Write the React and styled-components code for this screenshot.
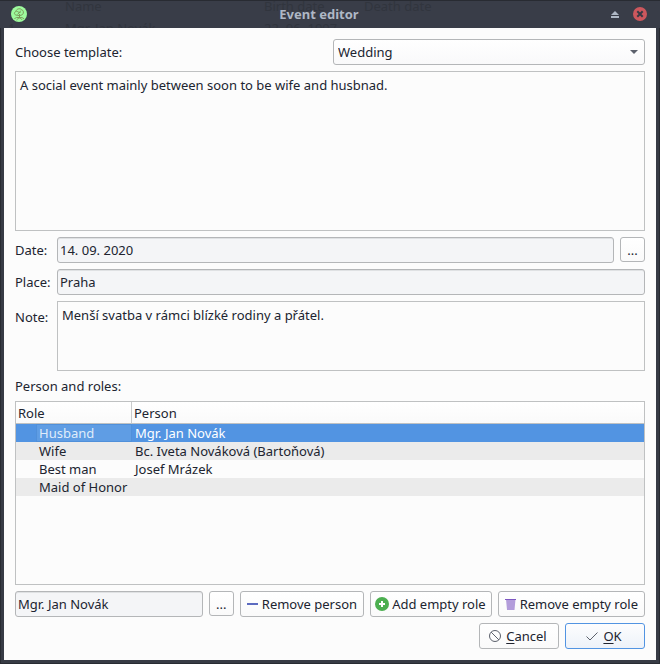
import React, { useState } from "react";
import styled, { createGlobalStyle, css } from "styled-components";

const Global = createGlobalStyle`
  *, *::before, *::after { box-sizing: border-box; }
  body { margin: 0; background: #373b45; }
  body, button, input, select, textarea, table {
    font-family: "Noto Sans", "Open Sans", sans-serif;
    font-size: 13px;
    line-height: 18px;
    color: #202430;
  }
`;

const Window = styled.div`
  display: flex;
  flex-direction: column;
  min-height: 100vh;
  padding: 0 4px 4px;
  background: #373b45;
  box-shadow: inset 1px 0 #282b32, inset -1px 0 #282b32, inset 0 -1px #282b32;
`;

const TitleBar = styled.header`
  position: relative;
  display: grid;
  grid-template-columns: 30px 1fr 50px;
  align-items: center;
  height: 28px;
  margin: 0 -4px;
  padding: 0 13px 0 11px;
  overflow: hidden;
  background: #393d48;
  box-shadow: inset 0 1px #282b32;
`;

const Backdrop = styled.div`
  position: absolute;
  inset: -5px 0 0;
  display: grid;
  grid-template-columns: 57px 199px 100px 1fr;
  grid-template-rows: 20px 22px;
  align-items: end;
  padding-left: 8px;
  line-height: 18px;
  color: #31353e;
`;

const Title = styled.h1`
  position: relative;
  margin: 0;
  font-size: 13px;
  line-height: 18px;
  font-weight: 700;
  text-align: center;
  color: #afb8c5;
`;

const WindowButtons = styled.div`
  position: relative;
  display: flex;
  justify-content: flex-end;
  gap: 14px;
`;

const WindowButton = styled.button`
  display: flex;
  padding: 0;
  border: 0;
  background: none;
`;

const AppIcon = styled.svg`
  position: relative;
  display: block;
`;

const Form = styled.form`
  display: flex;
  flex: 1;
  flex-direction: column;
  gap: 6px;
  padding: 11px;
  background: #fcfcfc;
`;

const TemplateRow = styled.div`
  display: grid;
  grid-template-columns: 1fr 1fr;
  gap: 6px;
  align-items: center;
`;

const Row = styled.div`
  display: flex;
  align-items: flex-start;
  gap: 6px;
  justify-content: ${(p) => (p.$end ? "flex-end" : "flex-start")};
`;

const Fields = styled.div`
  display: grid;
  grid-template-columns: 36px 1fr;
  gap: 6px;
  align-items: start;
`;

const Label = styled.label`
  line-height: ${(p) => (p.$tall ? "32px" : "26px")};
  white-space: nowrap;
`;

const Caption = styled.div`
  line-height: 18px;
`;

const frame = css`
  border: 1px solid #b4b6b8;
  border-radius: 3px;
  outline: 0;
`;

const SelectBox = styled.div`
  display: grid;
  align-items: center;
  > * { grid-area: 1 / 1; }
  > svg { justify-self: end; margin-right: 7px; pointer-events: none; }
`;

const Select = styled.select`
  ${frame}
  appearance: none;
  width: 100%;
  height: 26px;
  padding: 0 24px 0 4px;
  background: linear-gradient(#ffffff, #f9f9fa);
`;

const Input = styled.input`
  ${frame}
  flex: 1;
  width: 100%;
  min-width: 0;
  height: 26px;
  padding: 0 2px;
  background: #f4f5f7;
  box-shadow: inset 0 1px #dfe1e3;
`;

const TextArea = styled.textarea`
  display: block;
  width: 100%;
  height: ${(p) => (p.$large ? "160px" : "70px")};
  padding: 4px;
  border: 1px solid #bfc1c2;
  border-radius: 0;
  outline: 0;
  resize: none;
  background: #fcfcfc;
`;

const Button = styled.button`
  ${frame}
  display: flex;
  align-items: center;
  justify-content: center;
  gap: 3px;
  height: 26px;
  padding: 0 ${(p) => (p.$wide ? "6px" : "5px")} 0 ${(p) => (p.$wide ? "6px" : "4px")};
  white-space: nowrap;
  background: linear-gradient(#ffffff, #fafafa);
`;

const DialogButton = styled(Button)`
  min-width: 80px;
  gap: 4px;
  padding: 0 7px 0 4px;
  ${(p) => p.$primary && css`
    border-color: #5294e2;
    background: linear-gradient(#fdfdfe, #edf2f9);
  `}
`;

const BrowseButton = styled(Button)`
  width: 25px;
  height: 25px;
  padding: 0;
`;

const Mnemonic = styled.span`
  text-decoration: underline;
  text-decoration-thickness: 1px;
  text-underline-offset: 2px;
  text-decoration-skip-ink: none;
`;

const TableFrame = styled.div`
  flex: 1;
  min-height: 100px;
  border: 1px solid #bfc1c2;
`;

const Table = styled.table`
  width: 100%;
  border-collapse: separate;
  border-spacing: 0;
  table-layout: fixed;
`;

const HeadCell = styled.th`
  width: ${(p) => (p.$first ? "116px" : "auto")};
  height: 22px;
  padding: 0 2px;
  border-right: ${(p) => (p.$first ? "1px solid #c9cbcc" : "0")};
  border-bottom: 1px solid #bfc1c2;
  font-weight: 400;
  text-align: left;
  background: linear-gradient(#ffffff, #fafafa);
`;

const BodyRow = styled.tr`
  background: ${(p) => (p.$selected ? "#5294e2" : "transparent")};
  color: ${(p) => (p.$selected ? "#ffffff" : "inherit")};
  &:nth-child(even) { background: ${(p) => (p.$selected ? "#5294e2" : "#ebebeb")}; }
`;

const Cell = styled.td`
  height: 18px;
  padding: 0 0 0 ${(p) => (p.$indent ? "20px" : "3px")};
  white-space: nowrap;
`;

const CellText = styled.div`
  padding-left: ${(p) => (p.$indent ? "3px" : "0")};
  ${(p) => p.$current && css`
    background: #5f9de4;
    box-shadow: inset 0 0 0 1px #5090da;
    color: #dfecfa;
  `}
`;

const people = [
  ["Husband", "Mgr. Jan Novák"],
  ["Wife", "Bc. Iveta Nováková (Bartoňová)"],
  ["Best man", "Josef Mrázek"],
  ["Maid of Honor", ""],
];

const TreeIcon = () => (
  <AppIcon width="16" height="16" viewBox="0 0 16 16" aria-hidden="true">
    <circle cx="8" cy="8" r="8" fill="#9dfa9d" />
    <g fill="none" stroke="#7d9a5c" strokeWidth="1">
      <path d="M5 9C2.800 8.500 3 6 5 5.500 5.200 2.800 9 2 10.500 3.500c2.200.8 2.500 3.500 1 5C10 9.800 6.500 9.800 5 9Z" />
      <path d="M5.500 5.500c1.500-.5 2 1.500 4 1M10 4.500L6.500 8.500M8.500 8v4" />
      <path d="M3.500 13c1-2 3-1.500 5-1.500s3.500 0 4.500 1.500M5.500 14c1-1 2-2 3-2s2 1 2.500 2" />
    </g>
  </AppIcon>
);

const EjectIcon = () => (
  <svg width="8" height="14" viewBox="0 0 8 14" aria-hidden="true">
    <path d="M4 4L8 8H0zM0 9h8v2H0z" fill="#afb8c5" />
  </svg>
);

const CloseIcon = () => (
  <svg width="14" height="14" viewBox="0 0 14 14" aria-hidden="true">
    <circle cx="7" cy="7" r="7" fill="#cc575d" />
    <path d="M4.300 4.300l5.400 5.400M9.700 4.300L4.300 9.700" stroke="#363a45" strokeWidth="2" />
  </svg>
);

const ArrowIcon = () => (
  <svg width="8" height="4" viewBox="0 0 8 4" aria-hidden="true">
    <path d="M0 0h8L4 4z" fill="#5c616c" />
  </svg>
);

const MinusIcon = () => (
  <svg width="12" height="16" viewBox="0 0 12 16" aria-hidden="true">
    <path d="M0 7h11v2H0z" fill="#5c6bc0" />
  </svg>
);

const PlusIcon = () => (
  <svg width="14" height="14" viewBox="0 0 14 14" aria-hidden="true">
    <circle cx="7" cy="7" r="7" fill="#4caf50" />
    <path d="M6 4h2v2h2v2H8v2H6V8H4V6h2z" fill="#fff" />
  </svg>
);

const BinIcon = () => (
  <svg width="12" height="14" viewBox="0 0 12 14" aria-hidden="true">
    <path d="M1 2h9.500L9.500 13H2z" fill="#b39ddb" />
    <path d="M0 2h11v1H0z" fill="#7e57c2" />
  </svg>
);

const CancelIcon = () => (
  <svg width="14" height="14" viewBox="0 0 14 14" fill="none" stroke="#5c616c" aria-hidden="true">
    <circle cx="7" cy="7" r="5.500" />
    <path d="M3.100 3.100l7.800 7.800" />
  </svg>
);

const CheckIcon = () => (
  <svg width="14" height="14" viewBox="0 0 14 14" fill="none" stroke="#5c616c" aria-hidden="true">
    <path d="M1.500 7.500l3.500 3.500L12.500 3.500" />
  </svg>
);

export default function App() {
  const [selected, setSelected] = useState(0);
  return (
    <>
      <Global />
      <Window>
        <TitleBar>
          <Backdrop aria-hidden="true">
            <span />
            <span>Name</span>
            <span>Birth date</span>
            <span>Death date</span>
            <span>1</span>
            <span>Mgr. Jan Novák</span>
            <span>22. 06. 1997</span>
          </Backdrop>
          <TreeIcon />
          <Title>Event editor</Title>
          <WindowButtons>
            <WindowButton type="button" aria-label="Shade"><EjectIcon /></WindowButton>
            <WindowButton type="button" aria-label="Close"><CloseIcon /></WindowButton>
          </WindowButtons>
        </TitleBar>
        <Form onSubmit={(e) => e.preventDefault()}>
          <TemplateRow>
            <Label htmlFor="template">Choose template:</Label>
            <SelectBox>
              <Select id="template" defaultValue="Wedding">
                <option>Wedding</option>
              </Select>
              <ArrowIcon />
            </SelectBox>
          </TemplateRow>
          <TextArea
            $large
            aria-label="Template description"
            readOnly
            spellCheck={false}
            value="A social event mainly between soon to be wife and husbnad."
          />
          <Fields>
            <Label htmlFor="date">Date:</Label>
            <Row>
              <Input id="date" readOnly value="14. 09. 2020" />
              <BrowseButton type="button" aria-label="Choose date">...</BrowseButton>
            </Row>
            <Label htmlFor="place">Place:</Label>
            <Input id="place" defaultValue="Praha" />
            <Label htmlFor="note" $tall>Note:</Label>
            <TextArea id="note" spellCheck={false} defaultValue="Menší svatba v rámci blízké rodiny a přátel." />
          </Fields>
          <Caption id="roles">Person and roles:</Caption>
          <TableFrame>
            <Table aria-labelledby="roles">
              <thead>
                <tr>
                  <HeadCell scope="col" $first>Role</HeadCell>
                  <HeadCell scope="col">Person</HeadCell>
                </tr>
              </thead>
              <tbody>
                {people.map(([role, person], i) => (
                  <BodyRow key={role} $selected={i === selected} onClick={() => setSelected(i)}>
                    <Cell $indent>
                      <CellText $indent $current={i === selected}>{role}</CellText>
                    </Cell>
                    <Cell>{person}</Cell>
                  </BodyRow>
                ))}
              </tbody>
            </Table>
          </TableFrame>
          <Row>
            <Input aria-label="Person" readOnly value={people[selected][1]} />
            <BrowseButton type="button" aria-label="Choose person">...</BrowseButton>
            <Button type="button" $wide><MinusIcon />Remove person</Button>
            <Button type="button"><PlusIcon />Add empty role</Button>
            <Button type="button" $wide><BinIcon />Remove empty role</Button>
          </Row>
          <Row $end>
            <DialogButton type="button">
              <CancelIcon />
              <span><Mnemonic>C</Mnemonic>ancel</span>
            </DialogButton>
            <DialogButton type="submit" $primary>
              <CheckIcon />
              <span><Mnemonic>O</Mnemonic>K</span>
            </DialogButton>
          </Row>
        </Form>
      </Window>
    </>
  );
}
